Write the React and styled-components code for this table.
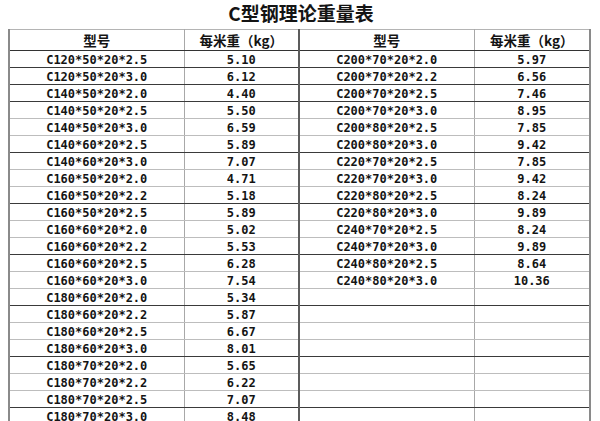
import styled, { createGlobalStyle } from "styled-components";

const GlobalStyle = createGlobalStyle`
  body {
    margin: 0;
    background: #ffffff;
  }
`;

const Page = styled.div`
  width: 600px;
  height: 421px;
  overflow: hidden;
  background: #ffffff;
  color: #141414;
`;

const Title = styled.h1`
  margin: 0;
  height: 29px;
  line-height: 25px;
  text-align: center;
  font-family: "Noto Sans CJK SC", "Liberation Sans", sans-serif;
  font-size: 19px;
  font-weight: 700;
  padding-left: 2px;
`;

const Table = styled.table`
  margin-left: 8px;
  width: 581px;
  border-collapse: collapse;
  table-layout: fixed;
  border-top: 1px solid #b4b4b4;
  border-left: 2px solid #8a8a8a;
  border-right: 2px solid #8a8a8a;
`;

const HeadCell = styled.th`
  height: 20px;
  padding: 0;
  font-family: "Noto Sans CJK SC", sans-serif;
  font-size: 13.5px;
  font-weight: 700;
  line-height: 20px;
  text-align: center;
  border-bottom: 1px solid #333;
  border-left: ${(p) => (p.$mid ? "2px solid #5c5c5c" : "1px solid #a8a8a8")};
  &:first-child {
    border-left: none;
  }
`;

const Row = styled.tr`
  height: 16.8px;
  & > td {
    border-bottom: 1px solid ${(p) => (p.$dark ? "#3a3a3a" : "#bdbdbd")};
  }
`;

const Cell = styled.td`
  padding: 0;
  padding-top: 2px;
  font-family: "DejaVu Sans Mono", "Liberation Mono", monospace;
  font-size: 12px;
  font-weight: 700;
  line-height: 14px;
  text-align: center;
  white-space: pre;
  border-left: ${(p) => (p.$mid ? "2px solid #5c5c5c" : "1px solid #a8a8a8")};
  &:first-child {
    border-left: none;
  }
`;

const left = [
  ["C120*50*20*2.5", "5.10"],
  ["C120*50*20*3.0", "6.12"],
  ["C140*50*20*2.0", "4.40"],
  ["C140*50*20*2.5", "5.50"],
  ["C140*50*20*3.0", "6.59"],
  ["C140*60*20*2.5", "5.89"],
  ["C140*60*20*3.0", "7.07"],
  ["C160*50*20*2.0", "4.71"],
  ["C160*50*20*2.2", "5.18"],
  ["C160*50*20*2.5", "5.89"],
  ["C160*60*20*2.0", "5.02"],
  ["C160*60*20*2.2", "5.53"],
  ["C160*60*20*2.5", "6.28"],
  ["C160*60*20*3.0", "7.54"],
  ["C180*60*20*2.0", "5.34"],
  ["C180*60*20*2.2", "5.87"],
  ["C180*60*20*2.5", "6.67"],
  ["C180*60*20*3.0", "8.01"],
  ["C180*70*20*2.0", "5.65"],
  ["C180*70*20*2.2", "6.22"],
  ["C180*70*20*2.5", "7.07"],
  ["C180*70*20*3.0", "8.48"],
];

const right = [
  ["C200*70*20*2.0", "5.97"],
  ["C200*70*20*2.2", "6.56"],
  ["C200*70*20*2.5", "7.46"],
  ["C200*70*20*3.0", "8.95"],
  ["C200*80*20*2.5", "7.85"],
  ["C200*80*20*3.0", "9.42"],
  ["C220*70*20*2.5", "7.85"],
  ["C220*70*20*3.0", "9.42"],
  ["C220*80*20*2.5", "8.24"],
  ["C220*80*20*3.0", "9.89"],
  ["C240*70*20*2.5", "8.24"],
  ["C240*70*20*3.0", "9.89"],
  ["C240*80*20*2.5", "8.64"],
  ["C240*80*20*3.0", "10.36"],
];

// the scanned sheet shows every third rule darker
const isDark = (i) => i < 3 || (i + 1) % 3 === 0;

const App = () => {
  return (
    <Page>
      <GlobalStyle />
      <Title>C型钢理论重量表</Title>
      <Table>
        <colgroup>
          <col style={{ width: 175 }} />
          <col style={{ width: 115 }} />
          <col style={{ width: 175 }} />
          <col style={{ width: 116 }} />
        </colgroup>
        <thead>
          <tr>
            <HeadCell>型号</HeadCell>
            <HeadCell>每米重（kg）</HeadCell>
            <HeadCell $mid>型号</HeadCell>
            <HeadCell>每米重（kg）</HeadCell>
          </tr>
        </thead>
        <tbody>
          {left.map(([model, weight], i) => {
            const r = right[i] || ["", ""];
            return (
              <Row key={model} $dark={isDark(i)}>
                <Cell>{model}</Cell>
                <Cell>{weight}</Cell>
                <Cell $mid>{r[0]}</Cell>
                <Cell>{r[1]}</Cell>
              </Row>
            );
          })}
        </tbody>
      </Table>
    </Page>
  );
};

export default App;
